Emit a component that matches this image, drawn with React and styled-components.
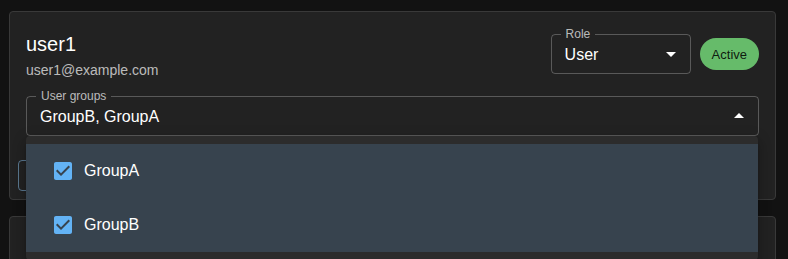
import React from 'react'
import styled, { createGlobalStyle } from 'styled-components'

const GlobalStyle = createGlobalStyle`
  html, body {
    margin: 0;
    padding: 0;
    background: #121212;
    font-family: "Liberation Sans", Arial, Helvetica, sans-serif;
    color: #fff;
    overflow: hidden;
  }
`

const ArrowDown = () => (
  <svg width="24" height="24" viewBox="0 0 24 24" fill="currentColor">
    <path d="M7 10l5 5 5-5z" />
  </svg>
)

const ArrowUp = () => (
  <svg width="24" height="24" viewBox="0 0 24 24" fill="currentColor">
    <path d="M7 14l5-5 5 5z" />
  </svg>
)

const CheckIcon = () => (
  <svg width="24" height="24" viewBox="0 0 24 24" fill="#63b3f5">
    <path d="M19 3H5c-1.11 0-2 .9-2 2v14c0 1.1.89 2 2 2h14c1.11 0 2-.9 2-2V5c0-1.1-.89-2-2-2zm-9 14l-5-5 1.41-1.41L10 14.17l7.59-7.59L19 8l-9 9z" />
  </svg>
)

//-----*-----*-----*-----*-----*-----//

const groups = ['GroupA', 'GroupB']

const App = () => {
  return (
    <>
      <GlobalStyle />
      <Page>
        <Card>
          <Content>
            <HeaderRow>
              <div>
                <Title>user1</Title>
                <Email>user1@example.com</Email>
              </div>
              <HeaderRight>
                <SelectBox width="140px">
                  <Label>Role</Label>
                  <Value>User</Value>
                  <IconSlot>
                    <ArrowDown />
                  </IconSlot>
                </SelectBox>
                <Chip>Active</Chip>
              </HeaderRight>
            </HeaderRow>
            <GroupsSelect>
              <SelectBox>
                <Label>User groups</Label>
                <Value>GroupB, GroupA</Value>
                <IconSlot>
                  <ArrowUp />
                </IconSlot>
              </SelectBox>
            </GroupsSelect>
          </Content>
          <Actions>
            <OutlinedButton>Save</OutlinedButton>
          </Actions>
        </Card>
        <Card>
          <Content>
            <Spacer />
          </Content>
        </Card>
      </Page>
      <Menu>
        <MenuList>
          {groups.map((g) => (
            <MenuItem key={g}>
              <CheckSlot>
                <CheckIcon />
              </CheckSlot>
              <ItemText>{g}</ItemText>
            </MenuItem>
          ))}
        </MenuList>
      </Menu>
    </>
  )
}

const Page = styled.div`
  padding: 11px 12px 0 9px;
  display: flex;
  flex-direction: column;
  gap: 16px;
`

const Card = styled.div`
  background: #222222;
  border: 1px solid #393939;
  border-radius: 4px;
`

const Content = styled.div`
  padding: 16px;
`

const Spacer = styled.div`
  height: 80px;
`

const HeaderRow = styled.div`
  display: flex;
  justify-content: space-between;
  align-items: center;
`

const Title = styled.div`
  font-size: 20px;
  font-weight: 400;
  line-height: 32px;
  color: #fff;
`

const Email = styled.div`
  font-size: 14px;
  line-height: 20px;
  color: rgba(255, 255, 255, 0.7);
`

const HeaderRight = styled.div`
  display: flex;
  align-items: center;
  gap: 9px;
`

const SelectBox = styled.div`
  position: relative;
  box-sizing: border-box;
  width: ${(p) => p.width || '100%'};
  height: 40px;
  border: 1px solid rgba(255, 255, 255, 0.25);
  border-radius: 4px;
  display: flex;
  align-items: center;
  padding: 0 32px 0 13px;
`

const Label = styled.span`
  position: absolute;
  top: -9px;
  left: 9px;
  padding: 0 5px;
  background: #222222;
  font-size: 12px;
  line-height: 16px;
  color: rgba(255, 255, 255, 0.7);
`

const Value = styled.span`
  font-size: 16px;
  color: #fff;
  line-height: 23px;
`

const IconSlot = styled.span`
  position: absolute;
  right: 7px;
  top: 7px;
  width: 24px;
  height: 24px;
  color: #fff;
`

const Chip = styled.div`
  height: 32px;
  padding: 0 12px;
  border-radius: 16px;
  background: #66bb6a;
  color: rgba(0, 0, 0, 0.87);
  font-size: 13px;
  display: flex;
  align-items: center;
`

const GroupsSelect = styled.div`
  margin-top: 16px;
`

const Actions = styled.div`
  padding: 8px;
  display: flex;
`

const OutlinedButton = styled.button`
  height: 31px;
  padding: 3px 9px;
  border: 1px solid rgba(144, 202, 249, 0.5);
  border-radius: 4px;
  background: transparent;
  color: #90caf9;
  font-family: inherit;
  font-size: 13px;
  font-weight: 500;
  text-transform: uppercase;
`

const Menu = styled.div`
  position: absolute;
  top: 136px;
  left: 26px;
  width: 732px;
  background: #2c2c2c;
  border-radius: 4px;
  box-shadow: 0 5px 5px -3px rgba(0, 0, 0, 0.2), 0 8px 10px 1px rgba(0, 0, 0, 0.14),
    0 3px 14px 2px rgba(0, 0, 0, 0.12);
`

const MenuList = styled.div`
  padding: 8px 0;
`

const MenuItem = styled.div`
  display: flex;
  align-items: center;
  height: 54px;
  padding: 0 16px;
  background: #37434e;
`

const CheckSlot = styled.span`
  width: 24px;
  height: 24px;
  padding: 9px;
  display: flex;
`

const ItemText = styled.span`
  font-size: 16px;
  color: #fff;
`

export default App
